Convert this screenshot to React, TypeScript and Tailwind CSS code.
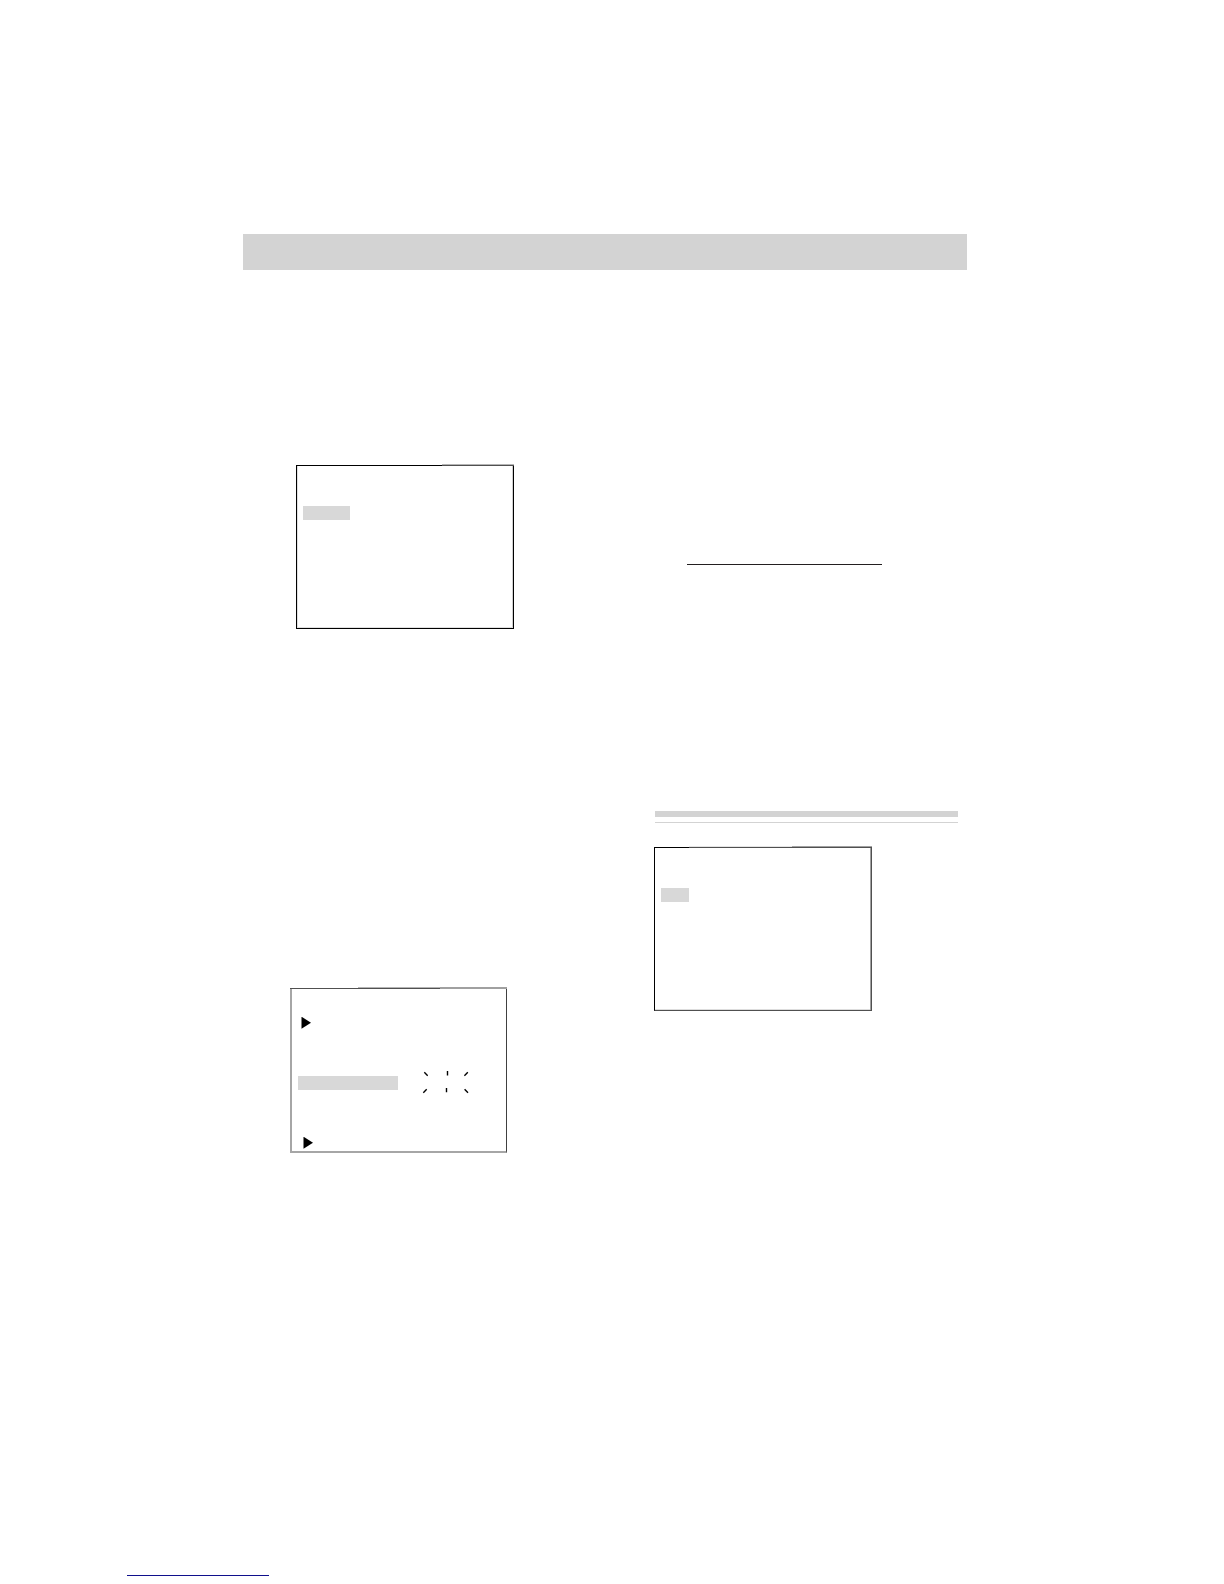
// Manual page: header band, two columns of on-screen menu frames and rules.

type FrameProps = {
  label: string;
  className: string;
  edge: React.ReactNode;
  body: string;
  children: React.ReactNode;
};

// The top edge is a row of its own because its line changes weight along the way.
function MenuFrame({ label, className, edge, body, children }: FrameProps) {
  return (
    <section aria-label={label} className={className}>
      <div className="flex h-[2px] items-end">{edge}</div>
      <div className={`flex flex-col border-x border-b ${body}`}>{children}</div>
    </section>
  );
}

function Pointer({ className }: { className: string }) {
  return (
    <svg viewBox="0 0 10 12" className={`h-3 w-[10px] ${className}`} aria-hidden="true">
      <path d="M0.5 -0.3v12L10 5.7z" fill="#000" />
    </svg>
  );
}

// Short rays around a blinking value.
function BlinkRays() {
  return (
    <svg
      viewBox="0 0 48 24"
      className="h-6 w-12"
      fill="none"
      stroke="#000"
      strokeWidth="1.4"
      aria-hidden="true"
    >
      <path d="M2.3 1.3l3.4 3.4M25.5 0v4.5M45.8 1.3l-3.4 3.4M1.3 21.7l3.4-3.4M24.5 17v4.3M42.6 18.3l3.4 3.4" />
    </svg>
  );
}

export default function App() {
  return (
    <div className="min-h-screen bg-white pt-[234px]">
      <div className="mr-[257px] ml-[243px]">
        <header className="h-9 bg-[#d3d3d3]" />

        <main className="flex">
          <div className="flex w-[411px] shrink-0 flex-col gap-[358px] pt-[194px]">
            <MenuFrame
              label="Menu 1"
              className="ml-[53px] w-[218px]"
              body="min-h-[163px] border-black pt-10 pl-[6px] shadow-[inset_1px_-1px_0_#e0e0e0,inset_-1px_0_0_#d0d0d0]"
              edge={
                <>
                  <div className="h-px w-[146px] bg-black" />
                  <div className="h-[2px] grow border-t border-b border-t-[#b4b4b4] border-b-[#505050]" />
                </>
              }
            >
              <div className="h-[14px] w-[47px] bg-[#d8d8d8]" />
            </MenuFrame>

            <MenuFrame
              label="Menu 2"
              className="ml-[47px] w-[217px]"
              body="min-h-[164px] border-[#a6a6a6] border-r-[#404040] border-b-2 border-l-2 pt-7"
              edge={
                <>
                  <div className="h-px w-[68px] bg-[#505050]" />
                  <div className="h-[2px] w-[82px] border-t border-b border-t-[#b4b4b4] border-b-[#505050]" />
                  <div className="h-[2px] grow bg-[#a0a0a0]" />
                </>
              }
            >
              <Pointer className="ml-[9px]" />
              <div className="my-[42px] ml-[6px] flex items-center gap-6">
                <div className="h-[14px] w-[100px] bg-[#d8d8d8]" />
                <BlinkRays />
              </div>
              <Pointer className="ml-[11px]" />
            </MenuFrame>
          </div>

          <div className="grow pt-[294px]">
            <hr className="ml-[33px] w-[195px] border-[#231f20]" />
            <div className="mt-[246px] mr-[9px] ml-px h-3 border-t-[6px] border-b border-[#d3d3d3]" />
            <MenuFrame
              label="Menu 3"
              className="mt-[23px] w-[218px]"
              body="min-h-[163px] border-[#505050] border-l-black pt-10 pl-[6px] shadow-[inset_-1px_0_0_#a0a0a0,inset_0_-1px_0_#dddddd]"
              edge={
                <>
                  <div className="h-px w-[35px] bg-black" />
                  <div className="h-[2px] w-[103px] border-t border-b border-t-[#e4e4e4] border-b-[#505050]" />
                  <div className="h-[2px] grow border-t border-b border-t-[#a0a0a0] border-b-[#505050]" />
                </>
              }
            >
              <div className="h-[14px] w-7 bg-[#d8d8d8]" />
            </MenuFrame>
          </div>
        </main>
      </div>

      <footer className="mt-[422px] ml-[127px] pb-2">
        <hr className="w-[142px] border-[#10108c]" />
      </footer>
    </div>
  );
}
